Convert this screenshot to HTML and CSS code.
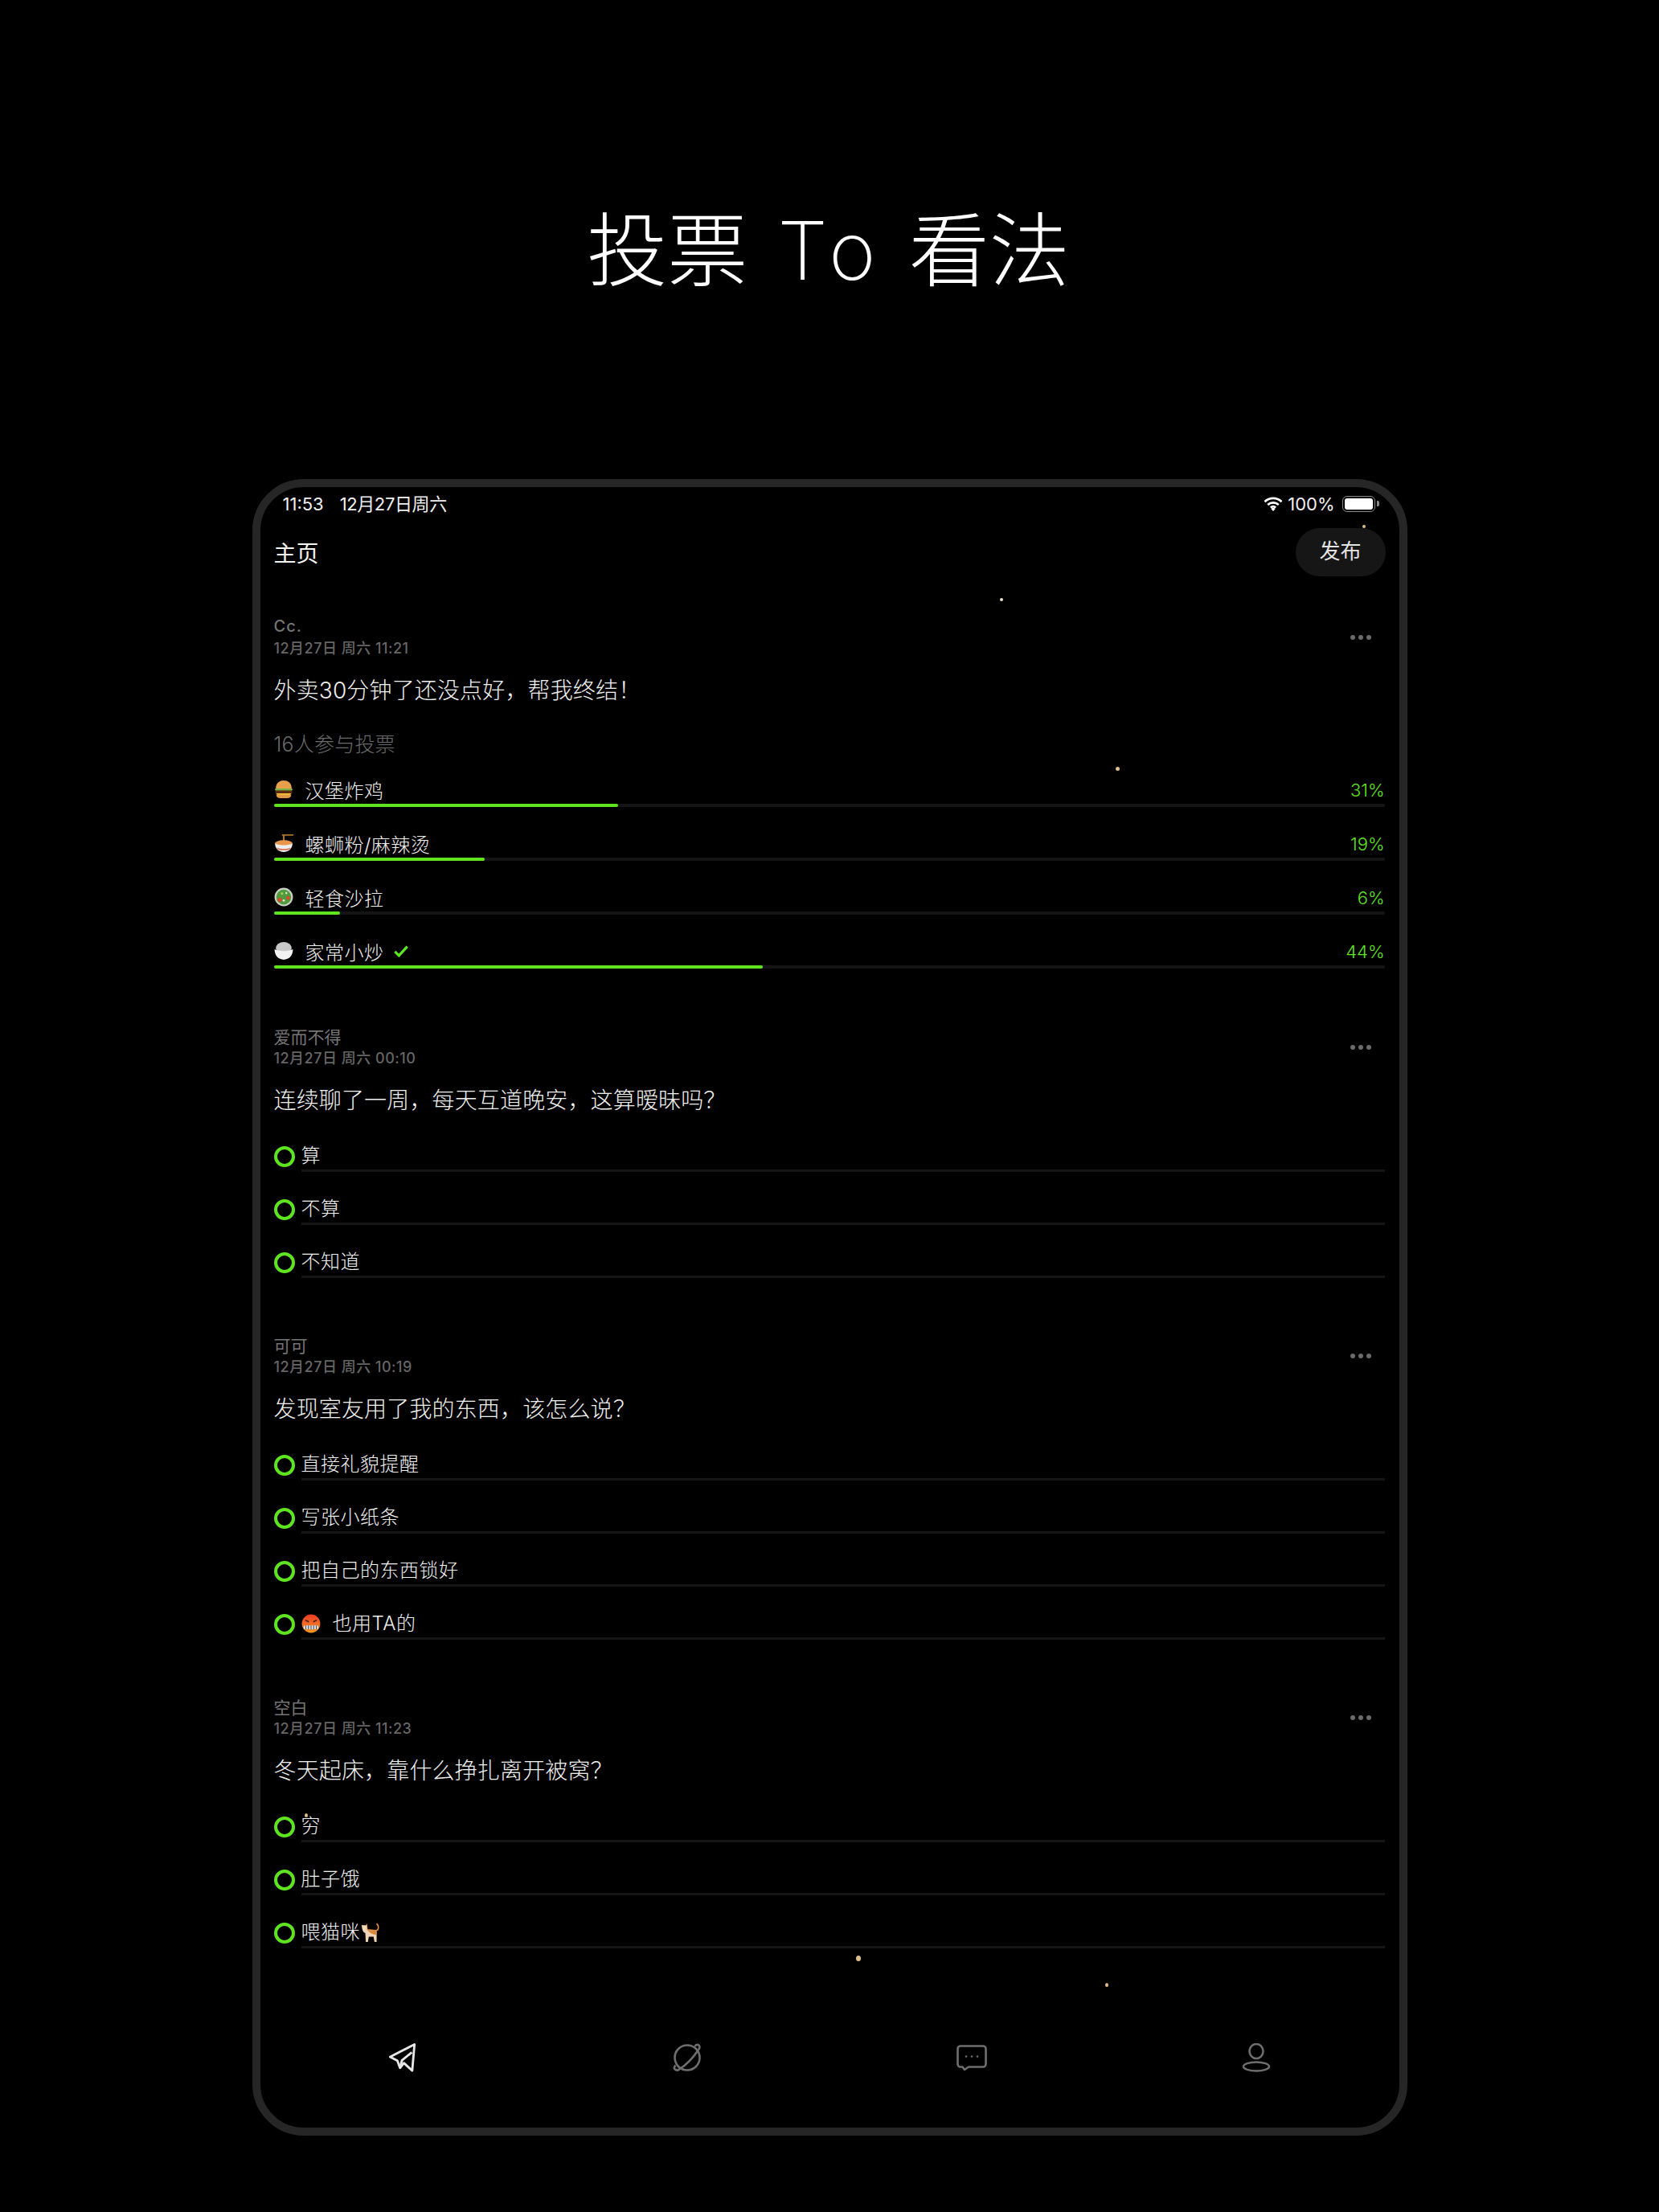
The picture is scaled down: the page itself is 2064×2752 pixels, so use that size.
FILE: index.html
```html
<!DOCTYPE html>
<html lang="zh-CN">
<head>
  <meta charset="UTF-8" />
  <title>投票 To 看法</title>
  <link rel="stylesheet" href="styles.css">
</head>
<body>
  <header class="hero">
    <h1>投票 <span class="hero-latin">To</span> 看法</h1>
  </header>

  <main class="tablet">
    <div class="status-bar">
      <span class="status-time">11:53</span>
      <span class="status-date">12月27日周六</span>
      <span class="status-right">
        <svg class="wifi" viewBox="0 0 24 18"><path d="M1.5 6.2a15 15 0 0 1 21 0M5.2 10a10 10 0 0 1 13.6 0M8.8 13.4a5 5 0 0 1 6.4 0" fill="none" stroke="#fff" stroke-width="2.6"/><path d="M12 18l-2.6-3a3.6 3.6 0 0 1 5.2 0z" fill="#fff"/></svg>
        <span>100%</span>
        <span class="battery"><i></i></span>
      </span>
    </div>

    <div class="nav">
      <span class="nav-title">主页</span>
      <span class="publish">发布</span>
    </div>

    <div class="feed">
      <article class="post">
        <div class="post-head">
          <div>
            <div class="author author-latin">Cc.</div>
            <div class="date">12月27日 周六 11:21</div>
          </div>
          <div class="more"><i></i><i></i><i></i></div>
        </div>
        <div class="question">外卖30分钟了还没点好，帮我终结！</div>
        <div class="vote-count">16人参与投票</div>

        <div class="result">
          <div class="result-label">
            <svg class="emoji" viewBox="0 0 22 22"><path d="M2 10C2 4 6 1 11 1s9 3 9 9z" fill="#e8a04c"/><rect x="1" y="10" width="20" height="2.5" rx="1" fill="#7cb342"/><rect x="1.5" y="12.5" width="19" height="3" fill="#5d2c12"/><path d="M2 15.5h18l-2 2H4z" fill="#f7c531"/><path d="M2.5 17h17c0 3-2 4-4 4h-9c-2 0-4-1-4-4z" fill="#e39a45"/></svg>
            <span>汉堡炸鸡</span>
            <b>31%</b>
          </div>
          <div class="bar"><div class="fill" style="width:31%"></div></div>
        </div>

        <div class="result">
          <div class="result-label">
            <svg class="emoji" viewBox="0 0 22 22"><path d="M9 1h13v1.6H12v7h-2V2.600H9z" fill="#a8702c"/><ellipse cx="11" cy="11" rx="10" ry="3.4" fill="#e8964a"/><path d="M1 11c0 6 4 10 10 10s10-4 10-10c-2 3-18 3-20 0z" fill="#eee"/><path d="M3 16c4 2 12 2 16 0l-1 2c-4 1.5-10 1.5-14 0z" fill="#d9705a"/></svg>
            <span>螺蛳粉/麻辣烫</span>
            <b>19%</b>
          </div>
          <div class="bar"><div class="fill" style="width:19%"></div></div>
        </div>

        <div class="result">
          <div class="result-label">
            <svg class="emoji" viewBox="0 0 22 22"><circle cx="11" cy="11" r="10.5" fill="#c9cfc4"/><circle cx="11" cy="11" r="8.5" fill="#4e9a3c"/><circle cx="6.5" cy="14" r="2.4" fill="#d9492f"/><circle cx="16" cy="12" r="2.2" fill="#d9492f"/><circle cx="11" cy="15" r="1.3" fill="#dfe8c8"/><circle cx="9" cy="7" r="1.5" fill="#9ccc5a"/><circle cx="14" cy="6.5" r="1.2" fill="#dfe8c8"/></svg>
            <span>轻食沙拉</span>
            <b>6%</b>
          </div>
          <div class="bar"><div class="fill" style="width:6%"></div></div>
        </div>

        <div class="result">
          <div class="result-label">
            <svg class="emoji" viewBox="0 0 22 22"><ellipse cx="11" cy="8" rx="9" ry="7" fill="#c8c8c8"/><path d="M0.5 9c3 3 18 3 21 0 0 7-4 12-10.500 12S0.5 16 0.5 9z" fill="#f2f2f2"/></svg>
            <span>家常小炒</span>
            <svg class="check" viewBox="0 0 20 16"><path d="M1.5 8.500L7 14 18.500 1.500" fill="none" stroke="#5fe51f" stroke-width="3.6"/></svg>
            <b>44%</b>
          </div>
          <div class="bar"><div class="fill" style="width:44%"></div></div>
        </div>
      </article>

      <article class="post">
        <div class="post-head">
          <div>
            <div class="author">爱而不得</div>
            <div class="date">12月27日 周六 00:10</div>
          </div>
          <div class="more"><i></i><i></i><i></i></div>
        </div>
        <div class="question">连续聊了一周，每天互道晚安，这算暧昧吗？</div>
        <div class="choices">
          <div class="choice"><span class="radio"></span><div class="choice-text">算</div></div>
          <div class="choice"><span class="radio"></span><div class="choice-text">不算</div></div>
          <div class="choice"><span class="radio"></span><div class="choice-text">不知道</div></div>
        </div>
      </article>

      <article class="post">
        <div class="post-head">
          <div>
            <div class="author">可可</div>
            <div class="date">12月27日 周六 10:19</div>
          </div>
          <div class="more"><i></i><i></i><i></i></div>
        </div>
        <div class="question">发现室友用了我的东西，该怎么说？</div>
        <div class="choices">
          <div class="choice"><span class="radio"></span><div class="choice-text">直接礼貌提醒</div></div>
          <div class="choice"><span class="radio"></span><div class="choice-text">写张小纸条</div></div>
          <div class="choice"><span class="radio"></span><div class="choice-text">把自己的东西锁好</div></div>
          <div class="choice"><span class="radio"></span><div class="choice-text">
            <svg class="emoji" viewBox="0 0 22 22"><defs><linearGradient id="angry" x1="0" y1="0" x2="0" y2="1"><stop offset="0" stop-color="#ee3a24"/><stop offset="1" stop-color="#f39a23"/></linearGradient></defs><circle cx="11" cy="11" r="10.5" fill="url(#angry)"/><path d="M4.5 7l4 2M17.5 7l-4 2" stroke="#4a1a10" stroke-width="1.5"/><rect x="2.5" y="13" width="17" height="4.5" rx="2" fill="#ddd"/><path d="M5 13v4.500M8 13v4.500M11 13v4.500M14 13v4.500M17 13v4.500" stroke="#555"/></svg>
            <span class="emoji-text">也用TA的</span>
          </div></div>
        </div>
      </article>

      <article class="post">
        <div class="post-head">
          <div>
            <div class="author">空白</div>
            <div class="date">12月27日 周六 11:23</div>
          </div>
          <div class="more"><i></i><i></i><i></i></div>
        </div>
        <div class="question">冬天起床，靠什么挣扎离开被窝？</div>
        <div class="choices">
          <div class="choice"><span class="radio"></span><div class="choice-text">穷</div></div>
          <div class="choice"><span class="radio"></span><div class="choice-text">肚子饿</div></div>
          <div class="choice"><span class="radio"></span><div class="choice-text">喂猫咪<svg class="cat" viewBox="0 0 24 24"><path d="M2 4l1.5 2L6 6l1.5-2 .5 5 10 1c2 0 3-2 3-4s-1-3-2-4" fill="none" stroke="#d98a3e" stroke-width="1.6"/><path d="M2 4l5.500 0 .5 5 11 1.500V23h-2.500l-1-6H10l-1 6H6.500L6 13C3 12 2 8 2 4z" fill="#f0d5b8"/><path d="M8 9l11 1.500V15c-4 0-8-2-11-6z" fill="#d98a3e"/></svg></div></div>
        </div>
      </article>
    </div>

    <nav class="tabs">
      <svg class="tab-icon active" viewBox="0 0 36 38"><path d="M33.500 1.500L1.500 18l9.500 5 3.500 9.500 5-6.500 11 10z" fill="none" stroke-linejoin="round"/><path d="M30 12L17 22.500 14.500 32" fill="none"/></svg>
      <svg class="tab-icon" viewBox="0 0 36 36"><circle cx="18" cy="18" r="15.500" fill="none"/><path d="M3.500 33c-3-1-1.500-4 0-5.500M32 8c2-2 2-5-.5-6-2-.5-3.500 1-4 2M3.500 33c2 1 4 .5 5-1C17 27 26 17 32 8" fill="none"/></svg>
      <svg class="tab-icon tab-chat" viewBox="0 0 38 32"><path d="M5 1.500h28c2 0 3.500 1.500 3.500 3.500v19c0 2-1.500 3.500-3.500 3.500H15L10 31l-2.500-3.500H5C3 27.500 1.500 26 1.500 24V5C1.500 3 3 1.500 5 1.500z" fill="none" stroke-linejoin="round"/><circle cx="12" cy="14.500" r="1.300" class="dot"/><circle cx="19" cy="14.500" r="1.300" class="dot"/><circle cx="26" cy="14.500" r="1.300" class="dot"/></svg>
      <svg class="tab-icon" viewBox="0 0 36 36"><ellipse cx="18" cy="10" rx="8.500" ry="9" fill="none"/><ellipse cx="18" cy="29" rx="16" ry="5.500" fill="none"/></svg>
    </nav>

    <i class="speck speck-a"></i>
    <i class="speck speck-b"></i>
    <i class="speck speck-c"></i>
    <i class="speck speck-d"></i>
    <i class="speck speck-e"></i>
    <i class="speck speck-f"></i>
  </main>
</body>
</html>
```
FILE: styles.css
```css
:root {
  --green: #5fe51f;
  --line: #151515;
  --frame: #262626;
  --muted: #757575;
  --text: #f0f0f0;
}

* {
  box-sizing: border-box;
}

html, body {
  margin: 0;
  background: #000;
}

body {
  width: 2064px;
  height: 2752px;
  overflow: hidden;
  font-family: "Inter", "Noto Sans CJK SC", sans-serif;
  color: var(--text);
  font-weight: 300;
}

.hero {
  height: 596px;
  padding-top: 247px;
  padding-right: 3px;
  text-align: center;
}

.hero h1 {
  margin: 0;
  font-size: 100px;
  line-height: 130px;
  font-weight: 200;
  word-spacing: 12px;
  color: #fff;
}

.hero-latin {
  margin: 0 -8px 0 -3px;
  letter-spacing: 9px;
}

.tablet {
  position: relative;
  width: 1437px;
  height: 2061px;
  margin: 0 auto;
  border: 10px solid var(--frame);
  border-radius: 64px;
  display: flex;
  flex-direction: column;
  overflow: hidden;
}

.status-bar {
  height: 42px;
  flex: none;
  padding: 0 26px 0 28px;
  display: flex;
  align-items: center;
  gap: 20px;
  font-size: 22px;
  font-weight: 400;
  color: #f0f0f0;
}

.status-date {
  margin-top: -4px;
  letter-spacing: -0.4px;
}

.status-right {
  margin-left: auto;
  display: flex;
  align-items: center;
  gap: 6px;
}

.wifi {
  width: 24px;
  height: 18px;
}

.battery {
  position: relative;
  width: 41px;
  height: 20px;
  margin-left: 3px;
  margin-right: 4px;
  padding: 2px;
  border: 1.5px solid #8a8a8a;
  border-radius: 6px;
  display: block;
}

.battery i {
  display: block;
  height: 100%;
  background: #fff;
  border-radius: 3px;
}

.battery::after {
  content: "";
  position: absolute;
  right: -6px;
  top: 5px;
  width: 3px;
  height: 7px;
  background: #8a8a8a;
  border-radius: 0 2px 2px 0;
}

.nav {
  height: 78px;
  flex: none;
  padding: 0 17px;
  display: flex;
  align-items: center;
  justify-content: space-between;
}

.nav-title {
  font-size: 28px;
  font-weight: 400;
  color: #f4f4f4;
}

.publish {
  width: 112px;
  height: 60px;
  line-height: 58px;
  text-align: center;
  font-size: 26px;
  font-weight: 400;
  border-radius: 30px;
  background: #161616;
  color: #e4e4e4;
}

.feed {
  flex: 1;
  min-height: 0;
  overflow: hidden;
  padding: 40px 18px 0 17px;
}

.post {
  margin-bottom: 70px;
}

.post-head {
  display: flex;
  align-items: center;
  justify-content: space-between;
}

.author {
  height: 27px;
  line-height: 29px;
  font-size: 21px;
  font-weight: 400;
  color: var(--muted);
}

.author-latin {
  line-height: 26px;
  font-size: 20px;
  letter-spacing: 1px;
  font-weight: 500;
}

.date {
  height: 26px;
  line-height: 28px;
  font-size: 18px;
  font-weight: 500;
  letter-spacing: 0.5px;
  color: #666;
}

.more {
  display: flex;
  gap: 4px;
  margin-right: 17px;
}

.more i {
  width: 6px;
  height: 6px;
  border-radius: 50%;
  background: #6a6a6a;
}

.question {
  height: 40px;
  margin-top: 18px;
  line-height: 44px;
  font-size: 28px;
  letter-spacing: 0.15px;
}

.vote-count {
  height: 25px;
  margin-top: 35px;
  line-height: 29px;
  font-size: 25px;
  letter-spacing: 0.2px;
  color: #6a6a6a;
}

.result {
  height: 67px;
  display: flex;
  flex-direction: column;
  justify-content: flex-end;
}

.result:last-child {
  height: 68px;
}

.result:last-child .bar {
  margin-bottom: 1px;
}

.result-label {
  height: 34px;
  padding-bottom: 2px;
  display: flex;
  align-items: center;
  font-size: 24px;
  letter-spacing: 0.5px;
}

.result-label b {
  margin-left: auto;
  margin-top: 1px;
  font-size: 22px;
  font-weight: 300;
  letter-spacing: 0;
  color: var(--green);
}

.emoji {
  width: 24px;
  height: 24px;
  margin-right: 15px;
  flex: none;
}

.check {
  width: 18px;
  height: 15px;
  margin-left: 12px;
}

.bar {
  height: 4px;
  background: var(--line);
  border-radius: 2px;
}

.fill {
  height: 100%;
  background: var(--green);
  border-radius: 2px;
}

.choices {
  margin-top: 5px;
}

.choice {
  height: 66px;
  display: flex;
  align-items: flex-end;
}

.radio {
  width: 26px;
  height: 26px;
  margin-bottom: 6px;
  flex: none;
  border: 4px solid var(--green);
  border-radius: 50%;
}

.choice-text {
  flex: 1;
  height: 38px;
  margin-left: 8px;
  line-height: 34px;
  font-size: 24px;
  letter-spacing: 0.5px;
  border-bottom: 3px solid var(--line);
  display: flex;
  align-items: center;
}

.cat {
  width: 26px;
  height: 26px;
}

.tabs {
  height: 174px;
  flex: none;
  display: grid;
  grid-template-columns: repeat(4, 1fr);
  align-items: center;
  justify-items: center;
}

.tab-icon {
  width: 36px;
  height: 36px;
  stroke: #6e6e6e;
  stroke-width: 2.6;
}

.tab-icon.active {
  stroke: #e6e6e6;
  stroke-width: 3;
}

.tab-chat {
  width: 38px;
  height: 32px;
}

.tab-icon .dot {
  fill: #6e6e6e;
  stroke: none;
}

.speck {
  position: absolute;
  border-radius: 50%;
  background: #e0bd8c;
}

.speck-a { left: 1371px; top: 47px; width: 4px; height: 4px; }
.speck-b { left: 920px; top: 138px; width: 4px; height: 4px; background: #e8e0d0; }
.speck-c { left: 1064px; top: 348px; width: 5px; height: 5px; }
.speck-d { left: 55px; top: 1650px; width: 4px; height: 5px; }
.speck-e { left: 741px; top: 1827px; width: 6px; height: 7px; }
.speck-f { left: 1051px; top: 1861px; width: 4px; height: 5px; }
```
